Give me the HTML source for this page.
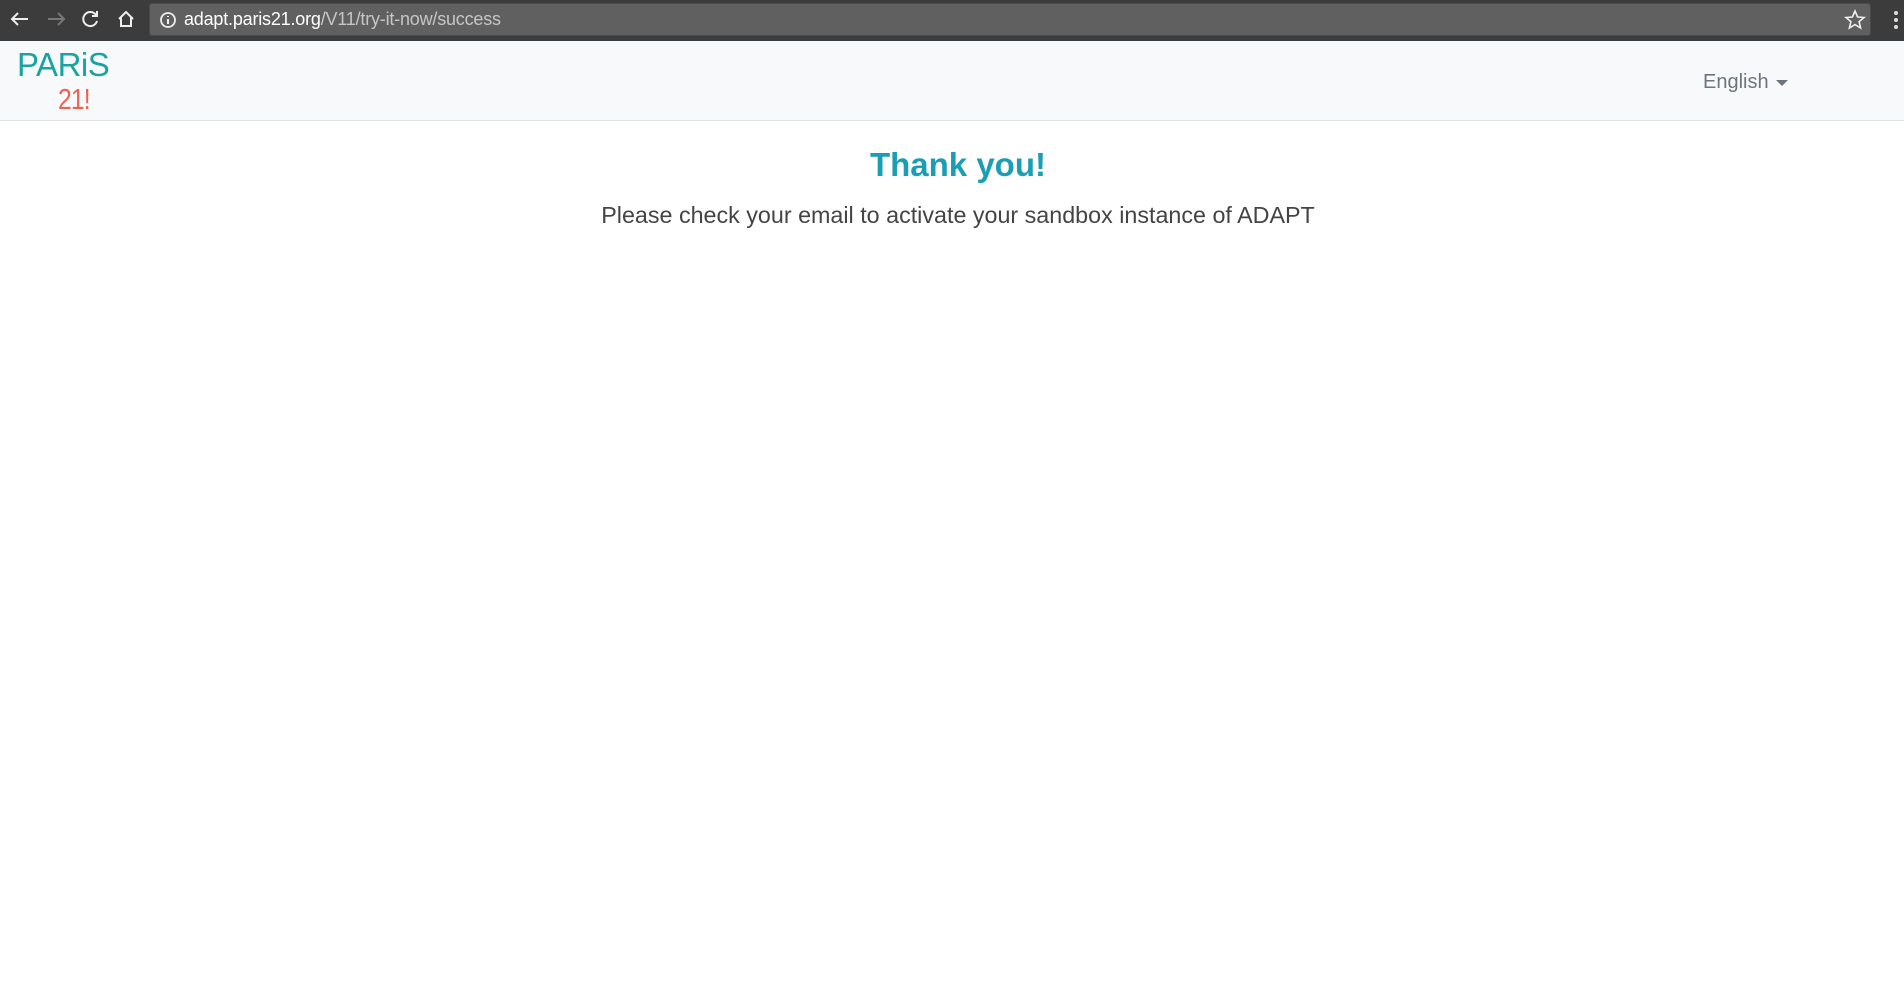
<!DOCTYPE html>
<html><head><meta charset="utf-8"><style>
body{margin:0;width:1904px;height:990px;background:#fff;font-family:"Liberation Sans",sans-serif;overflow:hidden;position:relative}
.bar{position:absolute;left:0;top:0;width:1904px;height:41px;background:#3c3c3c}
.url{position:absolute;left:149px;top:3px;width:1722px;height:33px;background:#606060;border-radius:3px;border:1px solid #4a4a4a;box-sizing:border-box}
.urltext{position:absolute;left:184px;top:9px;font-size:18px;color:#fff;letter-spacing:-0.2px}
.urltext span{color:#c6c6c6}
.nav{position:absolute;left:0;top:41px;width:1904px;height:79px;background:#f8f9fa;border-bottom:1px solid #dfe1e3}
.logo1{position:absolute;left:17px;top:46px;font-size:33px;color:#1aa3a3;letter-spacing:-0.5px}
.logo2{position:absolute;left:58px;top:84px;font-size:29px;color:#ee6150;letter-spacing:-1px;transform:scaleX(0.85);transform-origin:left}
.eng{position:absolute;left:1703px;top:71px;font-size:20px;color:#6c757d}
.caret{position:absolute;left:1776px;top:80px;width:0;height:0;border-left:6px solid transparent;border-right:6px solid transparent;border-top:6px solid #6c757d}
h1{position:absolute;left:0;width:1916px;top:146px;margin:0;text-align:center;font-size:33px;font-weight:bold;color:#1b9db4}
p{position:absolute;left:0;width:1916px;top:202px;margin:0;text-align:center;font-size:23.3px;color:#444;font-weight:300}
</style></head><body>
<div class="bar">
<svg width="140" height="41" style="position:absolute;left:0;top:0" fill="none" stroke-width="2">
<path d="M28 19H12M18 13l-6 6 6 6" stroke="#eee"/>
<path d="M48 19h16M58 13l6 6-6 6" stroke="#777"/>
<path d="M96 15a7 7 0 1 0 1 6" stroke="#eee"/><path d="M97 11v5h-5" stroke="#eee"/>
<path d="M119 19l7-7 7 7M121 17v9h10v-9" stroke="#eee"/>
</svg>
<div class="url">
<svg width="20" height="20" style="position:absolute;left:8px;top:6px"><circle cx="10" cy="10" r="7" stroke="#eee" stroke-width="1.8" fill="none"/><path d="M10 9v5M10 6v1" stroke="#eee" stroke-width="2"/></svg>
<svg width="22" height="22" style="position:absolute;left:1694px;top:5px"><path d="M11 2l2.6 6 6.4.5-4.9 4.2 1.5 6.3L11 15.6 5.4 19l1.5-6.3L2 8.5 8.4 8z" stroke="#eee" stroke-width="1.6" fill="none"/></svg>
</div>
<div class="urltext">adapt.paris21.org<span>/V11/try-it-now/success</span></div>
<svg width="8" height="24" style="position:absolute;left:1892px;top:9px"><circle cx="4" cy="4" r="2" fill="#ddd"/><circle cx="4" cy="11" r="2" fill="#ddd"/><circle cx="4" cy="18" r="2" fill="#ddd"/></svg>
</div>
<div class="nav"></div>
<div class="logo1">PARiS</div>
<div class="logo2">21!</div>
<div class="eng">English</div><div class="caret"></div>
<h1>Thank you!</h1>
<p>Please check your email to activate your sandbox instance of ADAPT</p>
</body></html>
